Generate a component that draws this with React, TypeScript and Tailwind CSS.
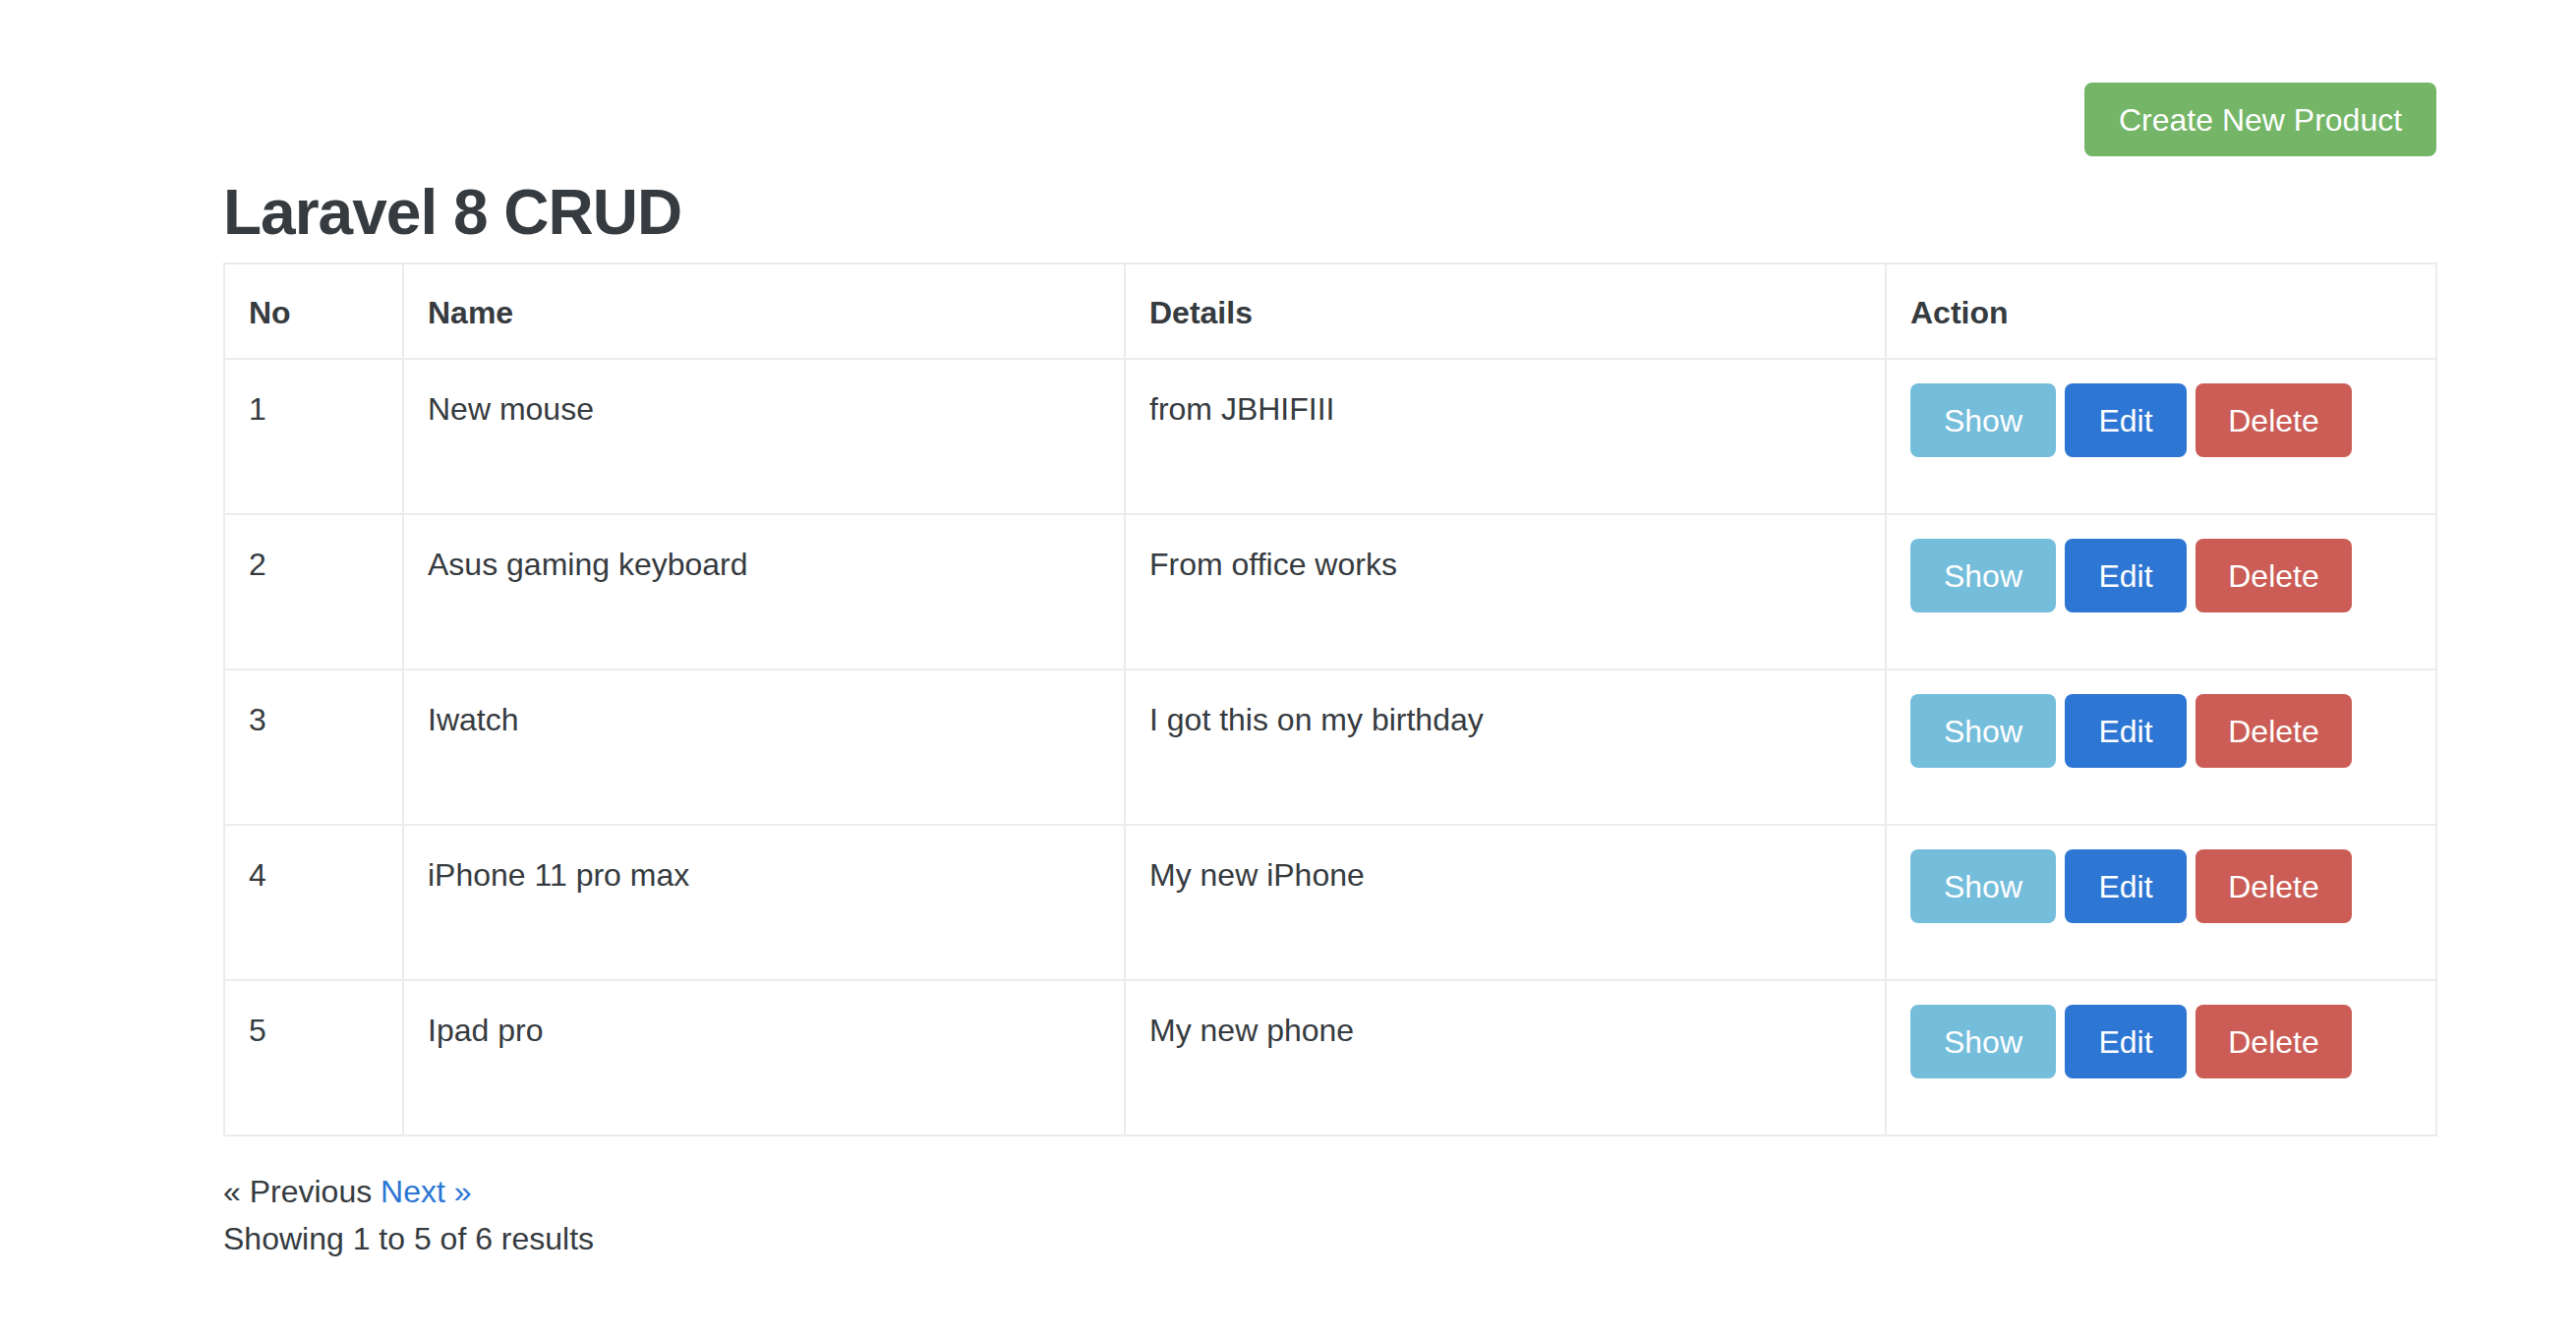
const products = [
  { id: 1, name: "New mouse", detail: "from JBHIFIII" },
  { id: 2, name: "Asus gaming keyboard", detail: "From office works" },
  { id: 3, name: "Iwatch", detail: "I got this on my birthday" },
  { id: 4, name: "iPhone 11 pro max", detail: "My new iPhone" },
  { id: 5, name: "Ipad pro", detail: "My new phone" },
];

export default function App() {
  return (
    <div className="min-h-screen bg-white font-['Liberation_Sans',Arial,sans-serif] text-[32px] leading-[48px] text-[#363b40]">
      <div className="ml-[227px] w-[2252px] pt-[84px]">
        {/* Create button */}
        <div className="flex justify-end">
          <a className="mr-[1px] flex h-[75px] w-[358px] items-center justify-center rounded-[8px] bg-[#74b567] text-white">
            Create New Product
          </a>
        </div>

        <h2 className="mt-[19px] mb-[13px] text-[64px] leading-[76px] font-bold tracking-[-1px]">
          Laravel 8 CRUD
        </h2>

        {/* Products table */}
        <table className="w-[2252px] table-fixed border-separate border-spacing-0 border-r-2 border-b-2 border-[#ececec]">
          <colgroup>
            <col className="w-[182px]" />
            <col className="w-[734px]" />
            <col className="w-[774px]" />
            <col className="w-[560px]" />
          </colgroup>
          <thead>
            <tr>
              {["No", "Name", "Details", "Action"].map((h) => (
                <th
                  key={h}
                  className="border-t-2 border-l-2 border-[#ececec] px-6 pt-[25px] pb-[22px] text-left align-top font-bold"
                >
                  {h}
                </th>
              ))}
            </tr>
          </thead>
          <tbody>
            {products.map((p) => (
              <tr key={p.id}>
                <td className="border-t-2 border-l-2 border-[#ececec] px-6 pt-[26px] align-top">{p.id}</td>
                <td className="border-t-2 border-l-2 border-[#ececec] px-6 pt-[26px] align-top">{p.name}</td>
                <td className="border-t-2 border-l-2 border-[#ececec] px-6 pt-[26px] align-top">{p.detail}</td>
                <td className="border-t-2 border-l-2 border-[#ececec] pl-6 pt-6 pb-[57px] align-top">
                  <div className="flex gap-[9px] text-white">
                    <a className="flex h-[75px] w-[148px] items-center justify-center rounded-[8px] bg-[#74bddb]">Show</a>
                    <a className="flex h-[75px] w-[124px] items-center justify-center rounded-[8px] bg-[#2d76d3]">Edit</a>
                    <button className="flex h-[75px] w-[159px] items-center justify-center rounded-[8px] bg-[#cb5d56]">
                      Delete
                    </button>
                  </div>
                </td>
              </tr>
            ))}
          </tbody>
        </table>

        {/* Pagination */}
        <div className="mt-8">
          <div>
            « Previous <a className="text-[#2d76d3]">Next »</a>
          </div>
          <div>Showing 1 to 5 of 6 results</div>
        </div>
      </div>
    </div>
  );
}
